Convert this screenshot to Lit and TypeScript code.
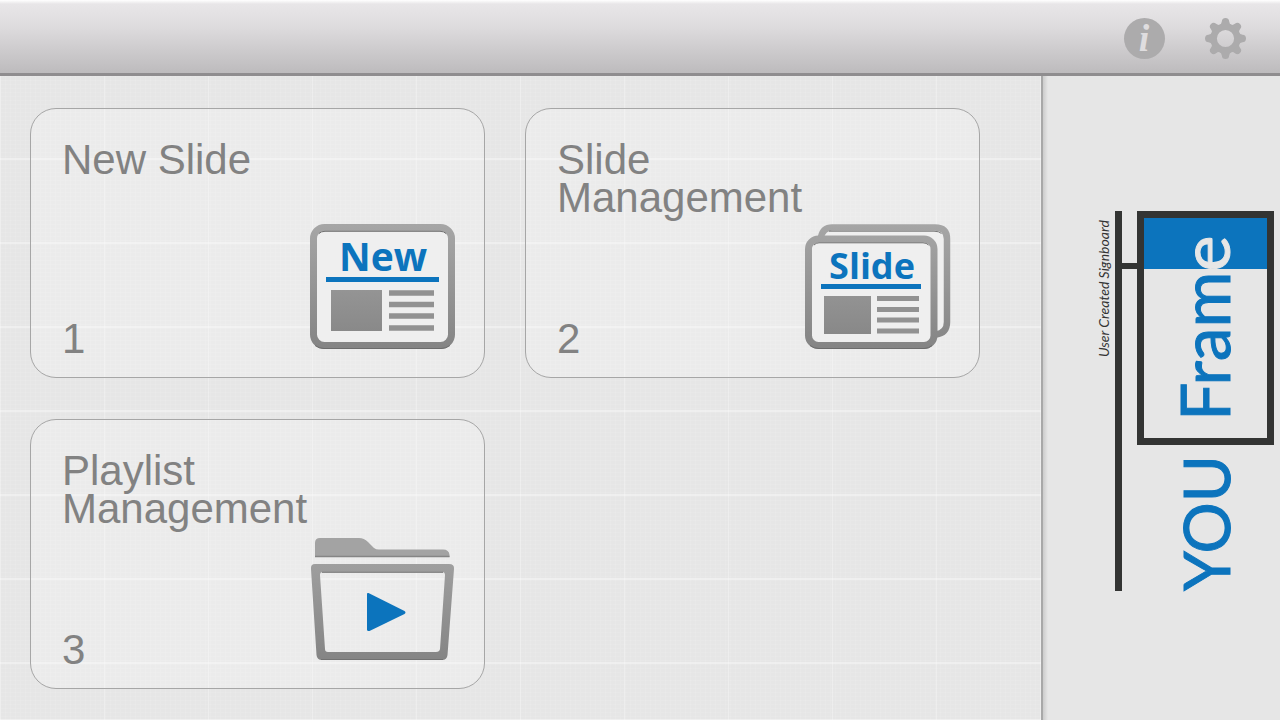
import { LitElement, html, css, svg } from "lit";
import { customElement, property } from "lit/decorators.js";

const grey = svg`
  <defs>
    <linearGradient id="metal" gradientUnits="userSpaceOnUse" x1="0" y1="0" x2="0" y2="126">
      <stop offset="0" stop-color="#a6a6a6" />
      <stop offset="1" stop-color="#848484" />
    </linearGradient>
  </defs>`;

const newIcon = html`<svg class="icon" viewBox="0 0 146 126" aria-hidden="true">
  ${grey}
  <rect x="3.5" y="3.5" width="138" height="118" rx="11" fill="#efefef" stroke="url(#metal)" stroke-width="7" />
  <path d="M9 9.5Q11 7.3 15 7.3H130Q134 7.3 136 9.5" fill="none" stroke="#707070" stroke-width="1" />
  <path d="M5 121.500Q9 124.500 14 124.500H131Q136 124.500 140 121.500" fill="none" stroke="#6c6c6c" stroke-width="1" />
  <text class="word new" x="73" y="47" text-anchor="middle">New</text>
  <rect x="16" y="53" width="113" height="5" fill="#0c74bd" />
  <rect x="21" y="66" width="51" height="41" fill="url(#metal)" />
  <path d="M79 69H124M79 80.500H124M79 92H124M79 104H124" stroke="#929292" stroke-width="5.500" />
</svg>`;

const slideIcon = html`<svg class="icon" viewBox="0 0 146 126" aria-hidden="true">
  ${grey}
  <path d="M16 13Q18 3.500 27 3.500H130Q142 3.500 142 15V98Q142 109 131 110.500" fill="#efefef" stroke="url(#metal)" stroke-width="6.500" />
  <path d="M24 7.200H129Q134 7.200 136.500 9.500" fill="none" stroke="#787878" stroke-width="1" />
  <rect x="3.500" y="15" width="125.500" height="106.500" rx="10" fill="#efefef" stroke="url(#metal)" stroke-width="7" />
  <path d="M9 21Q11 18.800 14 18.800H118Q121.500 18.800 123.500 21" fill="none" stroke="#707070" stroke-width="1" />
  <path d="M5 121.500Q9 124.500 14 124.500H119Q124 124.500 127 121.500" fill="none" stroke="#6c6c6c" stroke-width="1" />
  <text class="word slide" x="67" y="55" text-anchor="middle">Slide</text>
  <rect x="16" y="60" width="100" height="5" fill="#0c74bd" />
  <rect x="19" y="72" width="47" height="38" fill="url(#metal)" />
  <path d="M72 74.500H114M72 85.500H114M72 96H114M72 107H114" stroke="#929292" stroke-width="5" />
</svg>`;

const playlistIcon = html`<svg class="icon" viewBox="0 -1 146 126" aria-hidden="true">
  ${grey}
  <path d="M5 21V7Q5 2 10 2H49Q54 2 58 6L64 12Q66 13.500 69 13.500H133Q139 13.500 139.500 19V21Z" fill="#a3a3a3" />
  <path d="M5 20.500H139.500" stroke="#858585" stroke-width="1.500" />
  <path fill-rule="evenodd" fill="url(#metal)" d="M5 28H139Q144.500 28 144 33L137.500 119Q137 124 132 124H12Q7 124 6.500 119L1 33Q.5 28 5 28ZM13 36Q10 36 10 39L15 113Q15 116 18 116H126Q129.500 116 130 113L135 39Q135 36 132 36Z" />
  <path d="M12 36.300H133M11 123.500H133" fill="none" stroke="#727272" stroke-width="1" />
  <path d="M57 58Q57 56.500 58.500 57L94.500 75Q96.500 76.500 94.500 78L59.500 95Q57 95.500 57 93.500Z" fill="#0c74bd" />
</svg>`;

@customElement("menu-card")
class MenuCard extends LitElement {
  @property() label = "";
  @property() number = "";
  @property({ attribute: false }) icon: unknown;

  static styles = css`
    :host { display: block; }
    .card {
      box-sizing: border-box;
      width: 100%;
      min-height: 270px;
      display: grid;
      grid-template-rows: 1fr auto;
      margin: 0;
      padding: 32px 31px 19px;
      border: 1px solid #a6a6a6;
      border-radius: 26px;
      background: rgba(255, 255, 255, 0.22);
      font: 42px/38px "Liberation Sans", Arial, sans-serif;
      color: #828282;
      text-align: left;
      cursor: pointer;
      position: relative;
    }
    .title { max-width: 300px; }
    .art {
      position: absolute;
      right: 28px;
      bottom: 27px;
      width: 146px;
      height: 126px;
    }
    .icon { display: block; width: 100%; height: 100%; }
    .word { font-family: "Open Sans", "Noto Sans", sans-serif; font-weight: 700; fill: #0c74bd; }
    .new { font-size: 39px; }
    .slide { font-size: 36px; }
  `;

  render() {
    return html`<button class="card" type="button">
      <span class="title">${this.label}</span>
      <span class="number">${this.number}</span>
      <span class="art">${this.icon}</span>
    </button>`;
  }
}

@customElement("app-root")
class AppRoot extends LitElement {
  static styles = css`
    :host {
      display: flex;
      flex-direction: column;
      min-height: 100vh;
      background: #e6e6e6;
      font-family: "Liberation Sans", Arial, sans-serif;
    }
    .bar {
      box-sizing: border-box;
      height: 76px;
      display: flex;
      justify-content: flex-end;
      align-items: center;
      gap: 36px;
      padding: 3px 32px 0 0;
      background: linear-gradient(#ffffff 0, #e8e6e8 4px, #dedcde 26px, #bdbbbd 73px);
      border-bottom: 3px solid #8f8d8f;
    }
    .tool {
      width: 45px;
      height: 45px;
      padding: 0;
      border: 0;
      background: none;
      cursor: pointer;
    }
    .tool svg { display: block; width: 100%; height: 100%; }
    .i { font: italic 700 38px "Liberation Serif", serif; fill: #dfdddf; }
    .body { flex: 1; display: flex; }
    .cards {
      flex: 1;
      display: grid;
      grid-template-columns: 1fr 1fr;
      align-content: start;
      gap: 41px 40px;
      padding: 32px 61px 32px 30px;
      background:
        repeating-linear-gradient(90deg, rgba(255, 255, 255, 0.28) 0 1px, transparent 1px 104px),
        repeating-linear-gradient(rgba(255, 255, 255, 0.35) 0 2px, transparent 2px 84px) 0 -2px,
        repeating-linear-gradient(90deg, rgba(255, 255, 255, 0.08) 0 1px, transparent 1px 5px),
        repeating-linear-gradient(rgba(255, 255, 255, 0.08) 0 1px, transparent 1px 4px),
        #e6e6e6;
    }
    .side {
      box-sizing: border-box;
      width: 239px;
      border-left: 2px solid #a8a8a8;
      padding: 132px 0 0 48px;
      background: linear-gradient(90deg, #cccccc 0, #e6e6e6 5px);
    }
    .logo { display: block; width: 189px; height: 390px; }
    .name { font-family: Lato, sans-serif; fill: #0c74bd; stroke: #0c74bd; stroke-width: 1px; }
    .you { font-size: 64px; }
    .frame { font-size: 68px; }
    .light { fill: #e6e6e6; stroke: #e6e6e6; }
    .tagline { font: italic 400 14px Lato, sans-serif; fill: #333; }
  `;

  render() {
    return html`
      <header class="bar">
        <button class="tool" type="button" aria-label="Information">
          <svg viewBox="0 0 45 45">
            <circle cx="22.500" cy="22.500" r="20.500" fill="#acabac" />
            <text class="i" x="22" y="35" text-anchor="middle">i</text>
          </svg>
        </button>
        <button class="tool" type="button" aria-label="Settings">
          <svg viewBox="-22.5 -22.5 45 45">
            <circle r="11.800" fill="none" stroke="#acabac" stroke-width="6.400" />
            ${[0, 45, 90, 135, 180, 225, 270, 315].map(
              (a) => svg`<path transform="rotate(${a})" fill="#acabac" d="M-6 -13.500Q-3.900 -14.500 -3.700 -17Q-3.500 -20.500 0 -20.500Q3.500 -20.500 3.700 -17Q3.900 -14.500 6 -13.500Z" />`
            )}
          </svg>
        </button>
      </header>
      <div class="body">
        <main class="cards">
          <menu-card label="New Slide" number="1" .icon=${newIcon}></menu-card>
          <menu-card label="Slide Management" number="2" .icon=${slideIcon}></menu-card>
          <menu-card label="Playlist Management" number="3" .icon=${playlistIcon}></menu-card>
        </main>
        <aside class="side">
          <svg class="logo" viewBox="0 0 189 390" role="img" aria-label="YOU Frame, User Created Signboard">
            <rect x="51" y="6" width="126" height="55" fill="#0c74bd" />
            <rect x="49.500" y="6.500" width="130" height="227" fill="none" stroke="#333433" stroke-width="7" />
            <rect x="24" y="3" width="7" height="380" fill="#333433" />
            <rect x="31" y="55" width="16" height="6" fill="#333433" />
            <text class="tagline" transform="translate(18 149) rotate(-90)">User Created Signboard</text>
            <text class="name you" transform="translate(139 383) rotate(-90)">YOU</text>
            <text class="name frame" transform="translate(139 213) rotate(-90)">Fram<tspan class="light">e</tspan></text>
          </svg>
        </aside>
      </div>
    `;
  }
}
